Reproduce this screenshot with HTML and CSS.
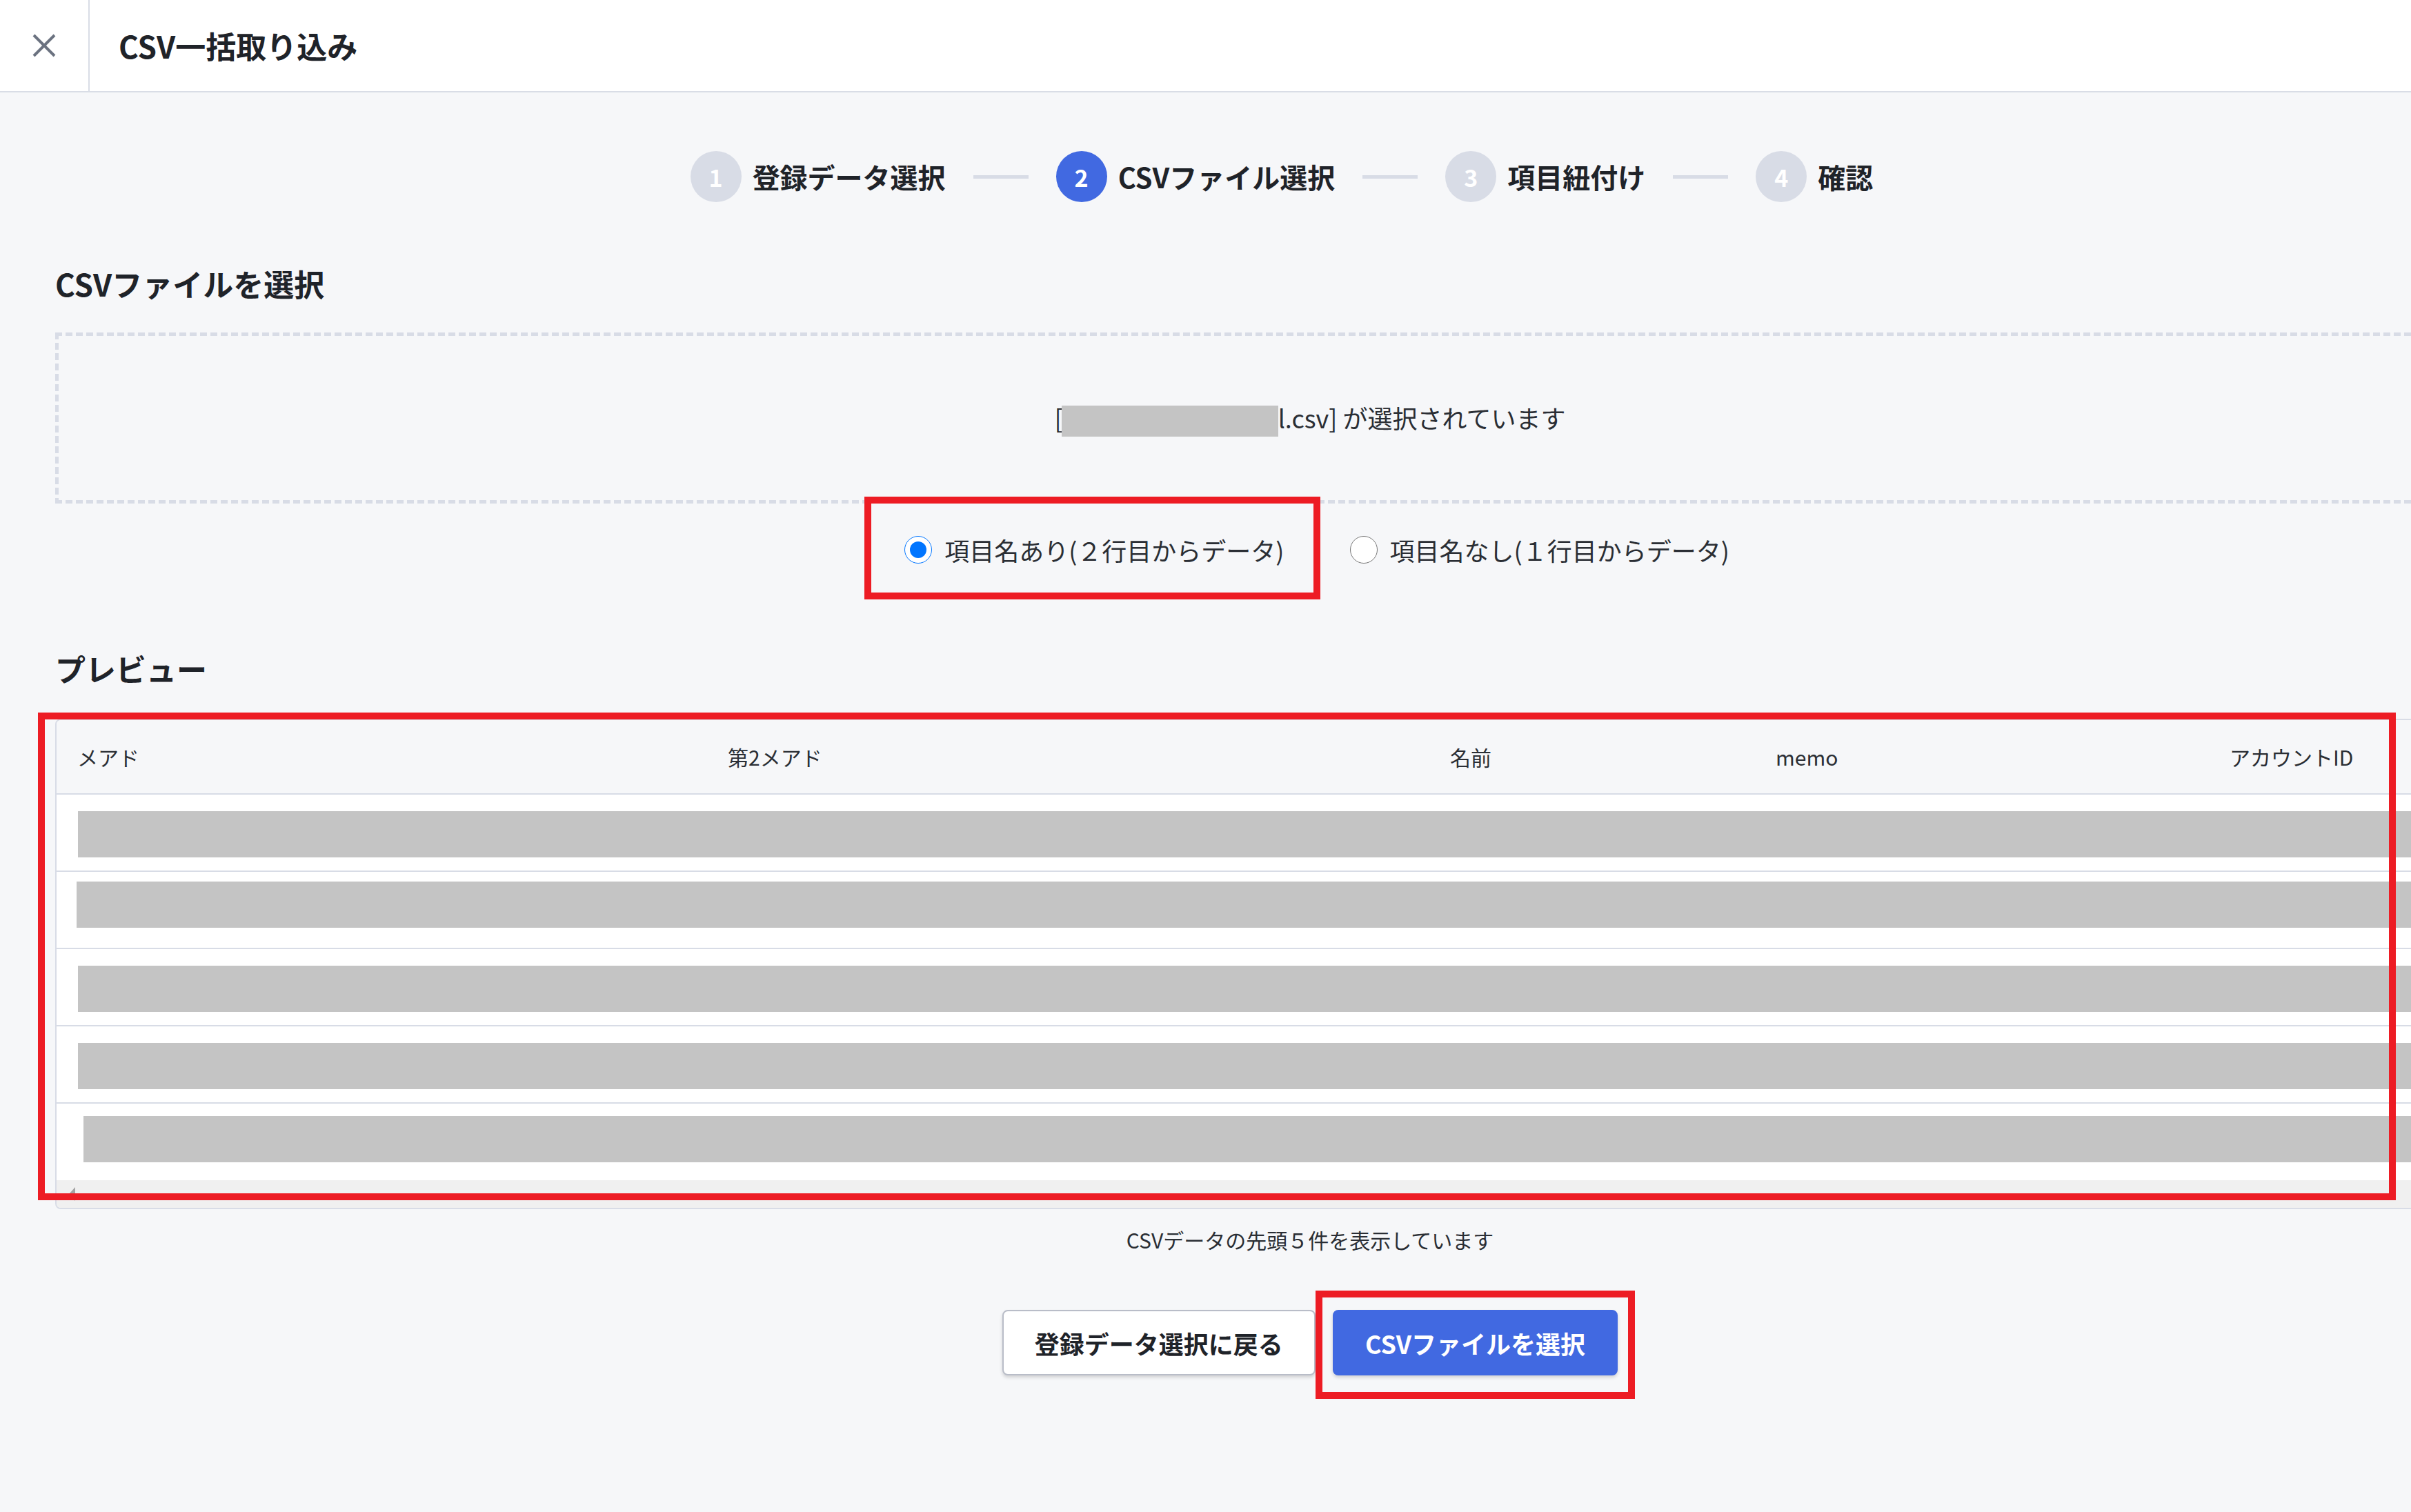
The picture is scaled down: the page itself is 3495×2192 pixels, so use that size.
FILE: index.html
```html
<!DOCTYPE html>
<html lang="ja">
<head>
<meta charset="UTF-8">
<meta name="viewport" content="width=device-width, initial-scale=1.0">
<title>CSV一括取り込み</title>
<link rel="stylesheet" href="styles.css">
</head>
<body>

<header class="topbar">
  <button class="close-btn" aria-label="閉じる">
    <svg viewBox="0 0 34 34" width="34" height="34">
      <path d="M2 2 L32 32 M32 2 L2 32" stroke="#6b7280" stroke-width="4" fill="none"/>
    </svg>
  </button>
  <h1 class="topbar-title">CSV一括取り込み</h1>
</header>

<main class="page">
  <ol class="stepper">
    <li class="step"><span class="step-num">1</span><span class="step-label">登録データ選択</span></li>
    <li class="step-line"></li>
    <li class="step active"><span class="step-num">2</span><span class="step-label">CSVファイル選択</span></li>
    <li class="step-line"></li>
    <li class="step"><span class="step-num">3</span><span class="step-label">項目紐付け</span></li>
    <li class="step-line"></li>
    <li class="step"><span class="step-num">4</span><span class="step-label">確認</span></li>
  </ol>

  <h2 class="section-title">CSVファイルを選択</h2>
  <div class="dropzone">
    <p class="file-name">[<span class="redact-inline"></span>l.csv] が選択されています</p>
  </div>

  <div class="header-options">
    <label class="option marked">
      <input type="radio" name="header-row" checked>
      <span>項目名あり(２行目からデータ)</span>
      <span class="annotation"></span>
    </label>
    <label class="option">
      <input type="radio" name="header-row">
      <span>項目名なし(１行目からデータ)</span>
    </label>
  </div>

  <h2 class="section-title preview-title">プレビュー</h2>
  <div class="preview">
    <div class="table-wrap">
      <table class="preview-table">
        <colgroup>
          <col class="col-mail">
          <col class="col-mail2">
          <col class="col-name">
          <col class="col-memo">
          <col>
        </colgroup>
        <thead>
          <tr><th>メアド</th><th>第2メアド</th><th>名前</th><th>memo</th><th>アカウントID</th></tr>
        </thead>
        <tbody>
          <tr><td colspan="5"><div class="redact"></div></td></tr>
          <tr><td colspan="5"><div class="redact redact-high"></div></td></tr>
          <tr><td colspan="5"><div class="redact"></div></td></tr>
          <tr><td colspan="5"><div class="redact"></div></td></tr>
          <tr><td colspan="5"><div class="redact redact-shift"></div></td></tr>
        </tbody>
      </table>
      <div class="hscroll"><span class="hscroll-arrow"></span></div>
    </div>
    <span class="annotation table-mark"></span>
  </div>

  <p class="caption">CSVデータの先頭５件を表示しています</p>

  <div class="actions">
    <button class="btn btn-secondary">登録データ選択に戻る</button>
    <span class="marked-btn">
      <button class="btn btn-primary">CSVファイルを選択</button>
      <span class="annotation"></span>
    </span>
  </div>
</main>

</body>
</html>
```

FILE: styles.css
```css
/* CSV import - step 2 */
body {
  margin: 0;
  background-color: #f6f7f9;
  color: #1f2329;
  font-family: "Noto Sans CJK JP", "Noto Sans", sans-serif;
  overflow: hidden;
}

/* top bar */
.topbar {
  display: flex;
  align-items: center;
  height: 132px;
  background-color: #fff;
  border-bottom: 2px solid #d9dde6;
}
.close-btn {
  width: 130px;
  height: 100%;
  border: none;
  border-right: 2px solid #d9dde6;
  background: none;
  display: flex;
  align-items: center;
  justify-content: center;
  padding: 0;
  cursor: pointer;
}
.topbar-title {
  margin: 0 0 0 42px;
  font-size: 44px;
  font-weight: 700;
}

/* page */
.page {
  width: 3638px;
  padding: 85px 80px 120px;
}

/* stepper */
.stepper {
  list-style: none;
  margin: 0;
  padding: 0 82px 0 0;
  display: flex;
  align-items: center;
  justify-content: center;
}
.step {
  display: flex;
  align-items: center;
  gap: 16px;
}
.step-num {
  width: 74px;
  height: 74px;
  border-radius: 50%;
  background-color: #d8dce6;
  color: #fff;
  font-size: 34px;
  font-weight: 700;
  display: flex;
  align-items: center;
  justify-content: center;
}
.step.active .step-num {
  background-color: #4169e1;
}
.step-label {
  font-size: 40px;
  font-weight: 700;
}
.step-line {
  width: 80px;
  height: 5px;
  margin: 0 40px;
  background-color: #d8dce6;
}

/* sections */
.section-title {
  margin: 85px 0 38px;
  font-size: 44px;
  font-weight: 700;
  line-height: 66px;
}
.preview-title {
  margin: 112px 0 40px;
}

.dropzone {
  height: 248px;
  display: flex;
  align-items: center;
  justify-content: center;
  background:
    repeating-linear-gradient(90deg, #d8dce6 0 10px, transparent 10px 15px) top left / 100% 5px no-repeat,
    repeating-linear-gradient(90deg, #d8dce6 0 10px, transparent 10px 15px) bottom left / 100% 5px no-repeat,
    repeating-linear-gradient(180deg, #d8dce6 0 10px, transparent 10px 15px) top left / 5px 100% no-repeat,
    repeating-linear-gradient(180deg, #d8dce6 0 10px, transparent 10px 15px) top right / 5px 100% no-repeat;
}
.file-name {
  margin: 0;
  font-size: 36px;
  color: #2a2e34;
}
.redact-inline {
  display: inline-block;
  width: 314px;
  height: 45px;
  margin-left: -2px;
  vertical-align: middle;
  background-color: #c4c4c4;
}

/* radio options */
.header-options {
  margin-top: 40px;
  padding-left: 20px;
  height: 54px;
  display: flex;
  justify-content: center;
  align-items: center;
  gap: 95px;
}
.option {
  position: relative;
  display: flex;
  align-items: center;
  gap: 18px;
  font-size: 36px;
  color: #2a2e34;
}
.option input {
  width: 40px;
  height: 40px;
  margin: 0;
}

/* red annotation boxes */
.annotation {
  position: absolute;
  border: 10px solid #ed1c24;
  pointer-events: none;
}
.option .annotation {
  left: -58px;
  right: -52px;
  top: -51px;
  bottom: -46px;
}

/* preview table */
.preview {
  position: relative;
}
.table-wrap {
  border: 2px solid #d8dce6;
  border-radius: 8px;
  overflow: hidden;
}
.preview-table {
  width: 100%;
  border-collapse: collapse;
  table-layout: fixed;
}
.col-mail { width: 943px; }
.col-mail2 { width: 1047px; }
.col-name { width: 472px; }
.col-memo { width: 658px; }
.preview-table th {
  height: 106px;
  padding: 0 30px;
  text-align: left;
  font-size: 30px;
  font-weight: 400;
  color: #2a2e34;
  background-color: #f6f7f9;
  border-bottom: 2px solid #d8dce6;
}
.preview-table td {
  height: 110px;
  padding: 0;
  background-color: #fff;
  border-bottom: 2px solid #d8dce6;
  vertical-align: top;
}
.preview-table tr:last-child td {
  border-bottom: none;
  height: 111px;
}
.redact {
  height: 67px;
  margin: 24px 0 0 31px;
  background-color: #c4c4c4;
}
.redact-high {
  margin-top: 14px;
  margin-left: 29px;
}
.redact-shift {
  margin-top: 18px;
  margin-left: 39px;
}
.hscroll {
  height: 40px;
  background-color: #f0f0f0;
  display: flex;
  align-items: center;
  padding-left: 18px;
}
.hscroll-arrow {
  width: 0;
  height: 0;
  border-top: 10px solid transparent;
  border-bottom: 10px solid transparent;
  border-right: 9px solid #a3a3a3;
}
.table-mark {
  left: -25px;
  top: -9px;
  width: 3398px;
  height: 687px;
}

.caption {
  margin: 22px 0 0;
  text-align: center;
  font-size: 30px;
  line-height: 45px;
  color: #2a2e34;
}

/* buttons */
.actions {
  margin-top: 79px;
  display: flex;
  justify-content: center;
  gap: 25px;
}
.btn {
  height: 95px;
  padding: 0 45px;
  border-radius: 8px;
  font-family: inherit;
  font-size: 36px;
  font-weight: 700;
  cursor: pointer;
  box-shadow: 0 3px 5px rgba(0, 0, 0, 0.15);
}
.btn-secondary {
  background-color: #fff;
  color: #1f2329;
  border: 2px solid #b9bdc8;
}
.btn-primary {
  background-color: #4169e1;
  color: #fff;
  border: 2px solid #4169e1;
}
.marked-btn {
  position: relative;
  display: flex;
}
.marked-btn .annotation {
  left: -25px;
  right: -25px;
  top: -28px;
  bottom: -34px;
}
```
